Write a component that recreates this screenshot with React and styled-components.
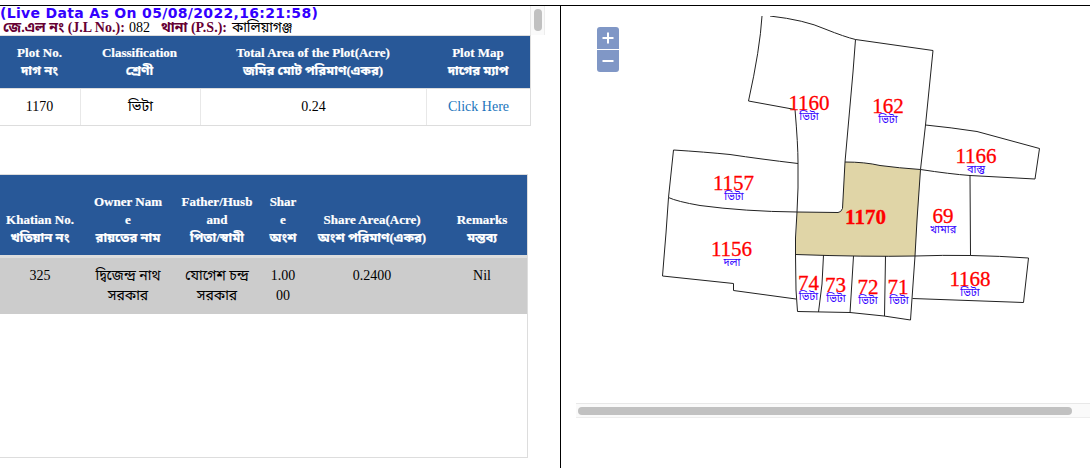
import React from "react";
import styled, { createGlobalStyle } from "styled-components";

const GlobalStyle = createGlobalStyle`
  * { box-sizing: border-box; }
  body { margin: 0; background: #fff; overflow: hidden; }
`;

const serif = `"Liberation Serif", "Noto Sans Bengali", "Noto Sans", serif`;

const Page = styled.div`
  display: flex;
  width: 1090px;
  height: 463px;
  margin-top: 5px;
  border-top: 1px solid #000;
  font-family: ${serif};
  font-size: 14px;
  color: #000;
  overflow: hidden;
`;

const RecordPane = styled.section`
  display: flex;
  flex-direction: column;
  width: 561px;
  flex: none;
  border-right: 1px solid #000;
`;

const TopStrip = styled.div`
  display: flex;
  justify-content: space-between;
  height: 29px;
  width: 545px;
`;

const Heading = styled.div`
  padding-left: 0;
`;

const LiveDate = styled.div`
  height: 14px;
  font: bold 14px/15px "DejaVu Sans", sans-serif;
  letter-spacing: 0.33px;
  color: #3300ff;
  white-space: nowrap;
`;

const PlaceLine = styled.div`
  display: flex;
  height: 15px;
  padding-left: 3px;
  line-height: 15px;
  white-space: pre;
`;

const Key = styled.b`
  color: #660033;
  width: ${(p) => p.$w}px;
`;

const Value = styled.span`
  width: ${(p) => p.$w}px;
  letter-spacing: ${(p) => p.$ls || 0}px;
`;

const VerticalScroll = styled.div`
  width: 15px;
  height: 29px;
  padding: 3px 0 0 3px;
  background: #fafafa;
  border-left: 1px solid #e8e8e8;
  border-right: 1px solid #ededed;
`;

const VerticalThumb = styled.div`
  width: 8px;
  height: 22px;
  border-radius: 4px;
  background: #c1c1c1;
`;

const PlotTable = styled.div`
  width: 531px;
  height: 91px;
  border: 1px solid #ddd;
  border-left: 0;
`;

const OwnerTable = styled.div`
  width: 528px;
  height: 284px;
  margin-top: 48px;
  border: 1px solid #ddd;
  border-left: 0;
`;

const Row = styled.div`
  display: grid;
  grid-template-columns: ${(p) => p.$cols};
`;

const HeadRow = styled(Row)`
  height: ${(p) => p.$h}px;
  align-items: end;
  padding-bottom: 8px;
  background: #285898;
  color: #fff;
  font-size: 13px;
  font-weight: bold;
  -webkit-text-stroke: 0.2px #fff;
`;

const PlotRow = styled(Row)`
  height: 37px;
  border-top: 1px solid #ddd;
`;

const OwnerRow = styled(Row)`
  height: 59px;
  border-top: 3px solid #ddd;
  background: #ccc;
  padding-top: 8px;
`;

const HeadCell = styled.div`
  text-align: center;
`;

const Line = styled.div`
  height: ${(p) => p.$h || 18}px;
  line-height: ${(p) => p.$h || 18}px;
  white-space: nowrap;
`;

const PlotCell = styled.div`
  text-align: center;
  line-height: 36px;
  padding-right: ${(p) => (p.$first ? "1px" : "0")};
  border-left: ${(p) => (p.$first ? "0" : "1px solid #e8e8e8")};
`;

const MapLink = styled.a`
  color: #1b75bc;
`;

const MapPane = styled.section`
  display: flex;
  flex-direction: column;
  flex: 1;
  min-width: 0;
  padding: 10px 0 0 15px;
`;

const MapArea = styled.div`
  display: flex;
  height: 387px;
  padding: 11px 0 0 21px;
`;

const ZoomControls = styled.div`
  display: flex;
  flex-direction: column;
  gap: 1px;
  width: 22px;
  flex: none;
`;

const ZoomButton = styled.button`
  display: grid;
  place-items: center;
  width: 22px;
  height: 22px;
  padding: 0 0 1px;
  border: 0;
  background: #8097c6;
  border-radius: ${(p) => (p.$top ? "3px 3px 0 0" : "0 0 3px 3px")};
`;

const Parcels = styled.svg`
  display: block;
  flex: none;
  margin-top: -11px;
`;

const PlotNumber = styled.text`
  font-family: ${serif};
  font-size: 21px;
  font-weight: ${(p) => (p.$bold ? "bold" : "normal")};
  fill: #f00;
  stroke: #f00;
  stroke-width: 0.3px;
  text-anchor: middle;
`;

const PlotKind = styled.text`
  font-family: ${serif};
  font-size: 11px;
  fill: #3300ff;
  text-anchor: middle;
`;

const HorizontalScroll = styled.div`
  height: 15px;
  padding: 3px 0 0 2px;
  background: #fafafa;
  border-top: 1px solid #e8e8e8;
  border-bottom: 1px solid #ededed;
`;

const HorizontalThumb = styled.div`
  width: 494px;
  height: 8px;
  border-radius: 4px;
  background: #c1c1c1;
`;

const plotCols = "79px 121px 226px 104px";
const ownerCols = "80px 96px 82px 50px 128px 92px";

const plotHeads = [
  ["Plot No.", "দাগ নং"],
  ["Classification", "শ্রেণী"],
  ["Total Area of the Plot(Acre)", "জমির মোট পরিমাণ(একর)"],
  ["Plot Map", "দাগের ম্যাপ"],
];

const ownerHeads = [
  ["Khatian No.", "খতিয়ান নং"],
  ["Owner Nam", "e", "রায়তের নাম"],
  ["Father/Husb", "and", "পিতা/স্বামী"],
  ["Shar", "e", "অংশ"],
  ["Share Area(Acre)", "অংশ পরিমাণ(একর)"],
  ["Remarks", "মন্তব্য"],
];

const ownerCells = [
  ["325"],
  ["দ্বিজেন্দ্র নাথ", "সরকার"],
  ["যোগেশ চন্দ্র", "সরকার"],
  ["1.00", "00"],
  ["0.2400"],
  ["Nil"],
];

const boundaries = [
  "M762 16Q760 49 748.5 101L795 109.500",
  "M795 109.500Q798 145 798 162L798 188L797 212L795.500 238L795.500 255L796 290L797.500 311.500",
  "M770 16Q805 20 825 29Q845 37 855.500 39.500L933 50.500L925.500 125L920.500 169.500L917 220L915 256L910.500 320L884 316L850 312.500L797.500 311.500",
  "M855.500 39.500L853 72L845 162L842.500 208.500Q841 212.500 838 212.500L797 212",
  "M845 162Q865 162 880 165.500Q899 168 920.500 169.500Q950 174 970 175.500L1035 179L1039.500 148.500L977 131.500Q951 127.500 925.500 125",
  "M970 175.500L970.500 255",
  "M673.500 150L668.500 197.500L666 233L662.500 276L733.500 283.500L733.500 290.500L796 299",
  "M673.500 150Q705 152 730 154.500Q760 159 798 163.500",
  "M668.500 197.500Q677 201.500 700 205.500Q745 211.500 797 212",
  "M795.500 254.500Q865 257 915 256Q970 254 1028.500 258L1023.500 302.500L912.500 298.500",
  "M823.500 255L822 284L818.500 312",
  "M853.500 256L850 313",
  "M885.500 256L884.500 316",
];

const plots = [
  ["1160", 809, 110, "ভিটা", 809, 120],
  ["162", 888, 113, "ভিটা", 888, 123],
  ["1166", 976, 163, "বাস্তু", 976, 173],
  ["1157", 733.5, 190, "ভিটা", 734, 200],
  ["1156", 731.5, 256, "দলা", 732, 266],
  ["69", 943, 223, "খামার", 943, 233],
  ["74", 808.5, 290, "ভিটা", 808.5, 300],
  ["73", 835.5, 292, "ভিটা", 836, 302],
  ["72", 868, 294, "ভিটা", 868, 304],
  ["71", 898, 294, "ভিটা", 899, 304],
  ["1168", 970, 286, "ভিটা", 970, 296],
];

function PlotMap() {
  return (
    <Parcels width="440" height="376" viewBox="619 16 440 376">
      <path
        d="M845 162Q865 162 880 165.500Q899 168 920.500 169.500L915 256Q865 257 795.500 254.500L797 212L838 212.500Q841 212.500 842.500 208.500Z"
        fill="#e0d5a7"
      />
      {boundaries.map((d) => (
        <path key={d} d={d} fill="none" stroke="#222" strokeWidth="1" />
      ))}
      {plots.map(([no, x, y, kind, kx, ky]) => (
        <g key={no}>
          <PlotNumber x={x} y={y}>{no}</PlotNumber>
          <PlotKind x={kx} y={ky}>{kind}</PlotKind>
        </g>
      ))}
      <PlotNumber $bold x="865.5" y="224">1170</PlotNumber>
    </Parcels>
  );
}

export default function App() {
  return (
    <>
      <GlobalStyle />
      <Page>
        <RecordPane>
          <TopStrip>
            <Heading>
              <LiveDate>(Live Data As On 05/08/2022,16:21:58)</LiveDate>
              <PlaceLine>
                <Key $w={126}>জে.এল নং (J.L No.):</Key>
                <Value $w={32}>082</Value>
                <Key $w={71}>থানা (P.S.):</Key>
                <Value $w={70} $ls={-0.2}>কালিয়াগঞ্জ</Value>
              </PlaceLine>
            </Heading>
            <VerticalScroll>
              <VerticalThumb />
            </VerticalScroll>
          </TopStrip>

          <PlotTable>
            <HeadRow $cols={plotCols} $h={52}>
              {plotHeads.map(([en, bn]) => (
                <HeadCell key={en}>
                  <Line>{en}</Line>
                  <Line>{bn}</Line>
                </HeadCell>
              ))}
            </HeadRow>
            <PlotRow $cols="80px 120px 226px 104px">
              <PlotCell $first>1170</PlotCell>
              <PlotCell>ভিটা</PlotCell>
              <PlotCell>0.24</PlotCell>
              <PlotCell>
                <MapLink>Click Here</MapLink>
              </PlotCell>
            </PlotRow>
          </PlotTable>

          <OwnerTable>
            <HeadRow $cols={ownerCols} $h={80}>
              {ownerHeads.map((lines) => (
                <HeadCell key={lines.join()}>
                  {lines.map((t) => (
                    <Line key={t}>{t}</Line>
                  ))}
                </HeadCell>
              ))}
            </HeadRow>
            <OwnerRow $cols={ownerCols}>
              {ownerCells.map((lines) => (
                <HeadCell key={lines.join()}>
                  {lines.map((t) => (
                    <Line key={t} $h={20}>{t}</Line>
                  ))}
                </HeadCell>
              ))}
            </OwnerRow>
          </OwnerTable>
        </RecordPane>

        <MapPane>
          <MapArea>
            <ZoomControls>
              <ZoomButton $top aria-label="Zoom in">
                <svg width="12" height="12" viewBox="0 0 12 12">
                  <path d="M0.500 6H11.500M6 0.500V11.500" stroke="#fff" strokeWidth="2" />
                </svg>
              </ZoomButton>
              <ZoomButton aria-label="Zoom out">
                <svg width="12" height="12" viewBox="0 0 12 12">
                  <path d="M0.500 6H11.500" stroke="#fff" strokeWidth="2" />
                </svg>
              </ZoomButton>
            </ZoomControls>
            <PlotMap />
          </MapArea>
          <HorizontalScroll>
            <HorizontalThumb />
          </HorizontalScroll>
        </MapPane>
      </Page>
    </>
  );
}
